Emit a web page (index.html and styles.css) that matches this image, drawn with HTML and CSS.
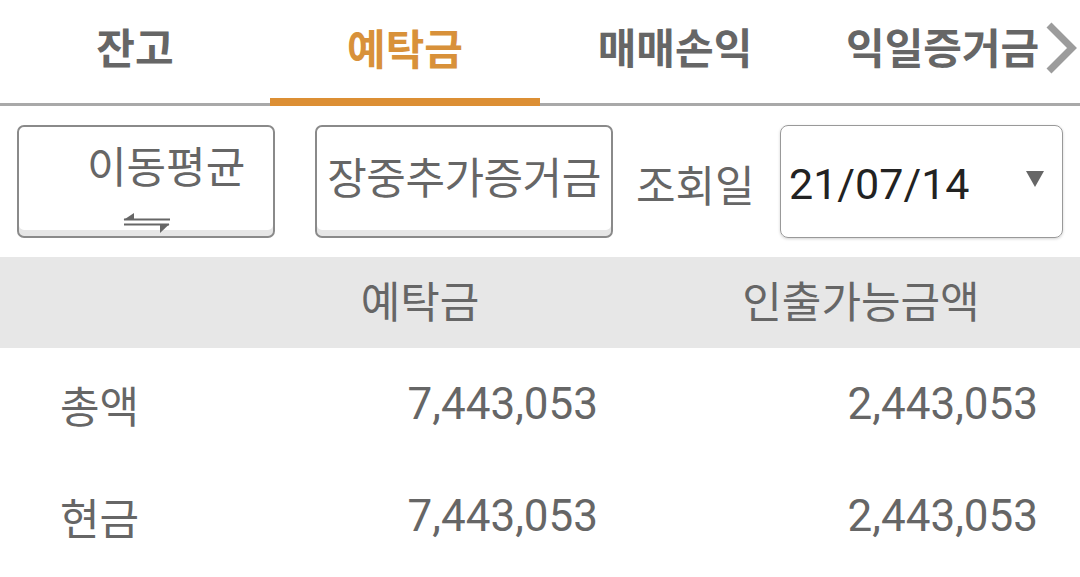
FILE: index.html
```html
<!DOCTYPE html>
<html lang="ko">
<head>
<meta charset="utf-8">
<title>예탁금</title>
<link rel="stylesheet" href="styles.css">
</head>
<body>
<div class="screen">
  <nav class="tabs">
    <div class="tab">잔고</div>
    <div class="tab active">예탁금</div>
    <div class="tab">매매손익</div>
    <div class="tab last">익일증거금</div>
    <svg class="chevron" width="32" height="52" viewBox="0 0 32 52"><path d="M4 3 L27 26 L4 49" fill="none" stroke="#9c9c9c" stroke-width="7"/></svg>
  </nav>

  <div class="controls">
    <button class="btn btn-avg">
      <span class="btn-label">이동평균</span>
      <svg class="swap" width="48" height="22" viewBox="0 0 48 22"><path d="M1 6.5 H47" stroke="#666" stroke-width="2"/><path d="M0.5 7 L11 0 L11 7 Z" fill="#666"/><path d="M1 11.5 H46" stroke="#666" stroke-width="2"/><path d="M46.5 11 L37 20 L37 11 Z" fill="#666"/></svg>
    </button>
    <button class="btn btn-margin"><span class="btn-label">장중추가증거금</span></button>
    <span class="date-label">조회일</span>
    <div class="date-select">
      <span class="date-value">21/07/14</span>
      <svg class="caret" width="18" height="16" viewBox="0 0 18 16"><path d="M0 0 H18 L9 16 Z" fill="#666"/></svg>
    </div>
  </div>

  <div class="table">
    <div class="row head">
      <div class="cell label"></div>
      <div class="cell c2">예탁금</div>
      <div class="cell c3">인출가능금액</div>
    </div>
    <div class="row">
      <div class="cell label">총액</div>
      <div class="cell c2 num">7,443,053</div>
      <div class="cell c3 num">2,443,053</div>
    </div>
    <div class="row">
      <div class="cell label">현금</div>
      <div class="cell c2 num">7,443,053</div>
      <div class="cell c3 num">2,443,053</div>
    </div>
  </div>
</div>
</body>
</html>
```
FILE: styles.css
```css
* { box-sizing: border-box; }
html, body { margin: 0; padding: 0; background: #fff; }
body {
  width: 1080px;
  height: 577px;
  overflow: hidden;
  font-family: "Noto Sans CJK KR", "Noto Sans", sans-serif;
  color: #666;
}
.screen { width: 1080px; }

.tabs {
  position: relative;
  display: flex;
  height: 106px;
  border-bottom: 3px solid #a9a9a9;
}
.tab {
  width: 270px;
  display: flex;
  align-items: center;
  justify-content: center;
  padding-bottom: 12px;
  font-size: 42px;
  font-weight: 700;
  color: #666;
  line-height: 1;
}
.tab.active {
  color: #d8913a;
  border-bottom: 8px solid #dc8f34;
  margin-bottom: -3px;
  padding-bottom: 4px;
}
.tab.last { justify-content: flex-start; padding-left: 36px; }
.chevron { position: absolute; left: 1045px; top: 22px; }

.controls {
  display: flex;
  align-items: stretch;
  margin-top: 19px;
  padding-left: 17px;
  height: 113px;
}
.btn {
  position: relative;
  margin: 0;
  background: #fff;
  border: 2px solid #8a8a8a;
  border-radius: 7px;
  box-shadow: inset 0 -6px 0 #e6e6e6;
  font-family: inherit;
  color: #666;
  font-size: 43px;
  line-height: 1;
  padding: 0;
}
.btn-avg {
  width: 258px;
  display: flex;
  flex-direction: column;
  align-items: flex-start;
  padding: 16px 0 0 68px;
}
.btn-avg .btn-label { display: block; }
.swap { margin: 27px 0 0 36px; }
.btn-margin {
  width: 298px;
  margin-left: 40px;
  font-size: 43px;
  display: flex;
  align-items: center;
  justify-content: center;
  padding-bottom: 12px;
  letter-spacing: -0.5px;
  white-space: nowrap;
}
.date-label {
  display: flex;
  align-items: center;
  margin-left: 23px;
  width: 144px;
  padding-top: 2px;
  font-size: 43px;
  color: #666;
}
.date-select {
  width: 283px;
  display: flex;
  align-items: center;
  justify-content: space-between;
  padding: 6px 18px 0 8px;
  border: 1px solid #999;
  border-radius: 8px;
  box-shadow: 0 1px 3px rgba(0,0,0,0.18);
}
.date-value {
  font-family: Roboto, "Liberation Sans", sans-serif;
  font-size: 43px;
  color: #222;
  line-height: 1;
}
.caret { margin-top: -12px; }

.table { margin-top: 19px; }
.row {
  display: grid;
  grid-template-columns: 270px 330px 480px;
  height: 112px;
  align-items: center;
}
.row.head {
  height: 91px;
  background: #e7e7e7;
}
.cell { font-size: 43px; line-height: 1; color: #666; }
.head .cell { text-align: center; padding-bottom: 6px; }
.head .c2 { padding-right: 30px; }
.head .c3 { padding-left: 42px; }
.label { padding-left: 60px; }
.num {
  text-align: right;
  font-family: Roboto, "Liberation Sans", sans-serif;
  font-size: 44px;
  letter-spacing: 0;
  color: #666;
}
.c2.num { padding-right: 2px; }
.c3.num { padding-right: 42px; }
```
